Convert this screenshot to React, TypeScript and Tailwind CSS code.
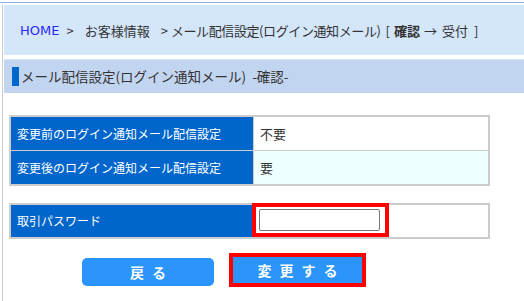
import React from "react";

const JP = { fontFamily: '"Noto Sans CJK JP", "DejaVu Sans", sans-serif' };

export default function App() {
  return (
    <div className="w-[524px] h-[301px] bg-white overflow-hidden text-[#333333]" style={JP}>
      <div className="pt-[2px]">
        <div className="h-px bg-[#8fb4ec]" />
      </div>
      <div className="ml-[2px] mt-[1px] h-[297px] border-l border-[#cccccc] pl-px">
        {/* breadcrumb */}
        <div className="mt-[2px] h-[50px] bg-[#d4e6fa] flex items-center pl-[16px] text-[13px] leading-none">
          <span className="text-[#2a2aff]" style={{ fontFamily: '"DejaVu Sans", sans-serif' }}>HOME</span>
          <span className="ml-[7px]">&gt;</span>
          <span className="ml-[11px]">お客様情報</span>
          <span className="ml-[11px]">&gt;</span>
          <span className="ml-[3px] tracking-[-0.4px]">メール配信設定(ログイン通知メール)</span>
          <span className="ml-[5px]">[</span>
          <span className="ml-[4px] font-bold">確認</span>
          <span className="ml-[4px]">→</span>
          <span className="ml-[5px]">受付</span>
          <span className="ml-[6px]">]</span>
        </div>
        {/* heading */}
        <div className="mt-[4px] h-[34px] bg-[#c2d5f0] border-t border-[#d6e4f7] flex items-center pl-[8px]">
          <div className="w-[7px] h-[19px] bg-[#0066cc]" />
          <span className="ml-[2px] text-[13.5px] leading-none">メール配信設定(ログイン通知メール)&nbsp;&nbsp;-確認-</span>
        </div>
        {/* table */}
        <div className="mt-[22px] ml-[5px] w-[481px] border-2 border-[#cccccc] bg-[#cccccc] grid grid-cols-[242px_234px] gap-px text-[12px]">
          <div className="h-[33px] bg-[#0066cc] text-white flex items-center pl-[6px]">変更前のログイン通知メール配信設定</div>
          <div className="h-[33px] bg-white flex items-center pl-[6px] text-[13px]">不要</div>
          <div className="h-[33px] bg-[#0066cc] text-white flex items-center pl-[6px]">変更後のログイン通知メール配信設定</div>
          <div className="h-[33px] bg-[#eeffff] flex items-center pl-[6px] text-[13px]">要</div>
        </div>
        {/* password */}
        <div className="mt-[17px] ml-[5px] w-[481px] border-2 border-[#cccccc] bg-[#cccccc] grid grid-cols-[242px_234px] gap-px text-[12px]">
          <div className="h-[32px] bg-[#0066cc] text-white flex items-center pl-[6px]">取引パスワード</div>
          <div className="h-[32px] bg-white relative">
            <div className="absolute left-[-2px] top-[-2px] w-[137px] h-[34px] border-4 border-[#ff0000] bg-white flex items-center pl-[3px]">
              <input className="w-[121px] h-[22px] border border-[#767676] rounded-[2px] bg-white outline-none" />
            </div>
          </div>
        </div>
        {/* buttons */}
        <div className="mt-[14px] flex items-center">
          <div className="ml-[78px] mt-[3px] w-[132px] h-[28px] rounded-[5px] bg-[#2b95fb] text-white font-bold text-[14px] flex items-center justify-center pl-[8px] tracking-[8px] leading-none">
            戻る
          </div>
          <div className="ml-[15px] w-[137px] h-[34px] border-4 border-[#ff0000] flex">
            <div className="flex-1 bg-[#2b95fb] text-white font-bold text-[14px] flex items-center justify-center pl-[8px] tracking-[8px] leading-none">
              変更する
            </div>
          </div>
        </div>
      </div>
    </div>
  );
}
